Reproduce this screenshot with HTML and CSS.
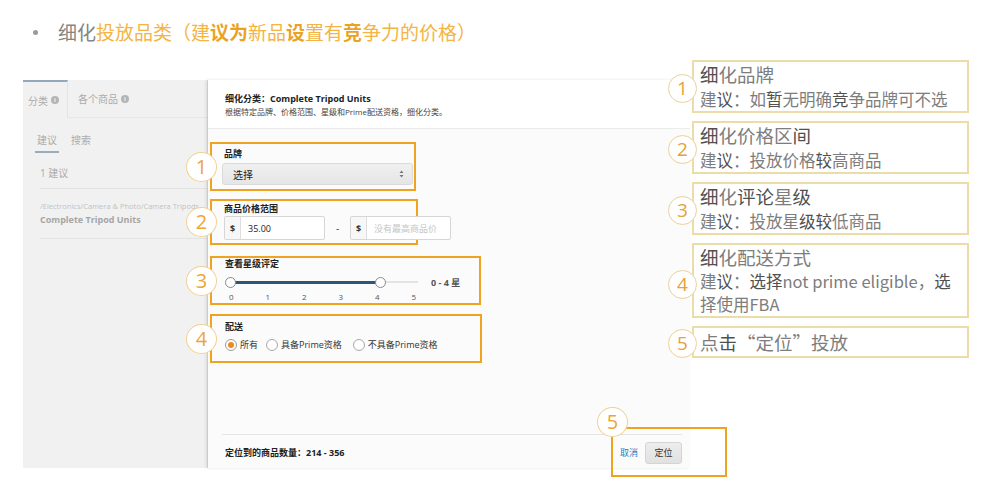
FILE: index.html
```html
<!DOCTYPE html>
<html lang="zh-CN">
<head>
<meta charset="utf-8">
<title>细化投放品类</title>
<link rel="stylesheet" href="styles.css">
</head>
<body>
<div class="page">
  <div class="headline">
    <span class="dot"></span>
    <span class="hl-grey">细化</span><span class="hl-org">投放品类（建<b>议为</b>新品<b>设</b>置有<b>竞</b>争力的价格）</span>
  </div>

  <div class="main">
    <div class="shot">
      <div class="side">
        <div class="tabs">
          <div class="tab active">分类 <span class="info">i</span></div>
          <div class="tab">各个商品 <span class="info">i</span></div>
        </div>
        <div class="subtabs">
          <span class="subtab on">建议</span>
          <span class="subtab">搜索</span>
        </div>
        <div class="count">1 建议</div>
        <div class="crumb">
          <div class="path">/Electronics/Camera &amp; Photo/Camera Tripods</div>
          <div class="cat">Complete Tripod Units</div>
        </div>
      </div>

      <div class="content">
        <div class="chead">
          <div class="ctitle">细化分类：Complete Tripod Units</div>
          <div class="csub">根据特定品牌、价格范围、星级和Prime配送资格，细化分类。</div>
        </div>

        <div class="groups">
          <div class="grp g1">
            <span class="num">1</span>
            <div class="lbl">品牌</div>
            <div class="select">
              <span>选择</span>
              <svg class="updown" width="5" height="8" viewBox="0 0 5 8"><path d="M2.5 0.5 L4.5 3 L0.5 3 Z M2.5 7.5 L4.5 5 L0.5 5 Z" fill="#777"/></svg>
            </div>
          </div>

          <div class="grp g2">
            <span class="num">2</span>
            <div class="lbl">商品价格范围</div>
            <div class="prices">
              <div class="ig"><span class="cur">$</span><span class="val">35.00</span></div>
              <span class="dash">-</span>
              <div class="ig"><span class="cur">$</span><span class="ph">没有最高商品价</span></div>
            </div>
          </div>

          <div class="grp g3">
            <span class="num">3</span>
            <div class="lbl">查看星级评定</div>
            <div class="srow">
              <div class="slider">
                <div class="track"></div>
                <div class="fill"></div>
                <span class="thumb t0"></span>
                <span class="thumb t4"></span>
              </div>
              <span class="srange">0 - 4 星</span>
            </div>
            <div class="ticks"><span>0</span><span>1</span><span>2</span><span>3</span><span>4</span><span>5</span></div>
          </div>

          <div class="grp g4">
            <span class="num">4</span>
            <div class="lbl">配送</div>
            <div class="radios">
              <label class="radio"><span class="rb checked"></span>所有</label>
              <label class="radio"><span class="rb"></span>具备Prime资格</label>
              <label class="radio"><span class="rb"></span>不具备Prime资格</label>
            </div>
          </div>
        </div>

        <div class="footer">
          <span class="found">定位到的商品数量：214 - 356</span>
          <div class="actions">
            <span class="cancel">取消</span>
            <span class="btn">定位</span>
          </div>
          <div class="hl5"><span class="num n5">5</span></div>
        </div>
      </div>
    </div>

    <div class="notes">
      <div class="note">
        <span class="nnum">1</span>
        <div class="nt"><b>细</b>化品牌</div>
        <div class="nb">建<b>议</b>：如<b>暂</b>无明确<b>竞</b>争品牌可不选</div>
      </div>
      <div class="note">
        <span class="nnum">2</span>
        <div class="nt"><b>细</b>化价格区<b>间</b></div>
        <div class="nb">建<b>议</b>：投放价格<b>较</b>高商品</div>
      </div>
      <div class="note">
        <span class="nnum">3</span>
        <div class="nt"><b>细</b>化<b>评论</b>星<b>级</b></div>
        <div class="nb">建<b>议</b>：投放星<b>级较</b>低商品</div>
      </div>
      <div class="note tall">
        <span class="nnum n4">4</span>
        <div class="nt"><b>细</b>化配送方式</div>
        <div class="nb">建<b>议</b>：<b>选择</b>not prime eligible，<b>选</b><br>择使用FBA</div>
      </div>
      <div class="note single">
        <span class="nnum">5</span>
        <div class="nt">点<b>击</b>“定位”投放</div>
      </div>
    </div>
  </div>
</div>
</body>
</html>
```

FILE: styles.css
```css
* { box-sizing: border-box; }

html, body {
  margin: 0;
  padding: 0;
  background: #ffffff;
}

body {
  font-family: "Open Sans", "Noto Sans CJK SC", sans-serif;
  color: #333;
}

.page {
  width: 1000px;
  height: 497px;
  overflow: hidden;
}

/* ---------- headline ---------- */
.headline {
  display: flex;
  align-items: center;
  padding: 22px 0 0 33px;
  height: 42px;
  margin-bottom: 18px;
  font-family: "Noto Sans CJK SC", sans-serif;
  font-size: 19px;
  line-height: 20px;
}
.dot {
  width: 5px;
  height: 5px;
  border-radius: 50%;
  background: #9a9a9a;
  margin-right: 20px;
  flex: none;
}
.hl-grey { color: #858585; }
.hl-org { color: #f4b443; }
.hl-org b { color: #eba31f; font-weight: 700; }

/* ---------- main row ---------- */
.main {
  display: flex;
  align-items: flex-start;
  padding-left: 23px;
}

.shot {
  margin-top: 20px;
  width: 667px;
  height: 388px;
  display: flex;
}

/* ---------- left side panel ---------- */
.side {
  width: 185px;
  background: #f1f1f1;
  border-right: 1px solid #dedede;
  overflow: hidden;
  font-size: 10px;
  color: #ababab;
}

.tabs {
  height: 38px;
  display: flex;
  border-bottom: 1px solid #e6e6e6;
}
.tab {
  display: flex;
  align-items: center;
  gap: 3px;
  padding-left: 10px;
  flex: 1;
}
.tab.active {
  flex: 0 0 45px;
  padding-left: 5px;
  border-top: 2px solid #93a8ba;
  border-right: 1px solid #e4e4e4;
  margin-bottom: -1px;
  background: #f1f1f1;
}
.info {
  display: inline-flex;
  width: 8px;
  height: 8px;
  border-radius: 50%;
  background: #b4b4b4;
  color: #f4f4f4;
  font-size: 6px;
  font-weight: 700;
  line-height: 8px;
  justify-content: center;
}

.subtabs {
  display: flex;
  gap: 10px;
  padding: 15px 0 0 12px;
  height: 39px;
}
.subtab {
  line-height: 14px;
  height: 20px;
  padding: 0 2px;
}
.subtab.on {
  border-bottom: 2px solid #9badbd;
}

.count {
  margin-left: 17px;
  height: 32px;
  line-height: 32px;
  border-bottom: 1px solid #e2e2e2;
}

.crumb {
  margin-left: 17px;
  padding-top: 11px;
  height: 50px;
  border-bottom: 1px solid #e2e2e2;
}
.path {
  font-size: 7.5px;
  line-height: 12px;
  color: #c2c2c2;
  white-space: nowrap;
}
.cat {
  font-size: 9px;
  font-weight: 700;
  line-height: 16px;
  color: #a6a6a6;
}

/* ---------- right content ---------- */
.content {
  width: 482px;
  background: #fbfbfb;
  display: flex;
  flex-direction: column;
  box-shadow: -2px 0 3px rgba(0, 0, 0, 0.10);
  position: relative;
}

.chead {
  height: 49px;
  padding: 13px 0 0 17px;
  background: #ffffff;
  border-bottom: 1px solid #ebebeb;
}
.ctitle {
  font-size: 9px;
  font-weight: 700;
  line-height: 12px;
  color: #222;
}
.csub {
  font-size: 8px;
  line-height: 14px;
  color: #444;
}

.groups {
  padding: 13px 0 0 2px;
  display: flex;
  flex-direction: column;
  align-items: flex-start;
}

.grp {
  position: relative;
  border: 2px solid #f0a320;
  padding-left: 12px;
}
.lbl {
  font-size: 9px;
  font-weight: 700;
  line-height: 12px;
  color: #222;
}

.num {
  position: absolute;
  left: -26px;
  top: 50%;
  margin-top: -15px;
  width: 31px;
  height: 30px;
  border-radius: 50%;
  border: 1.5px solid #f2cf92;
  background: #ffffff;
  color: #eda536;
  font-size: 20px;
  line-height: 27px;
  text-align: center;
  font-family: "Open Sans", sans-serif;
}

/* group 1 */
.g1 {
  width: 206px;
  height: 49px;
  padding: 4px 0 0 10px;
}
.g1 .lbl { padding-left: 2px; }
.select {
  margin-top: 3px;
  width: 191px;
  height: 22px;
  border: 1px solid #dadada;
  border-radius: 3px;
  background: linear-gradient(#f0f0f0, #e6e6e6);
  display: flex;
  align-items: center;
  justify-content: space-between;
  padding: 0 8px 0 10px;
  font-size: 10px;
  color: #222;
}

/* group 2 */
.g2 {
  margin-top: 8px;
  width: 208px;
  height: 46px;
  padding-top: 2px;
}
.prices {
  margin-top: 1px;
  display: flex;
  align-items: center;
}
.ig {
  width: 101px;
  height: 24px;
  border: 1px solid #d6d6d6;
  border-radius: 2px;
  background: #ffffff;
  display: flex;
  align-items: center;
  font-size: 9px;
  flex: none;
}
.cur {
  width: 16px;
  height: 100%;
  display: flex;
  align-items: center;
  justify-content: center;
  border-right: 1px solid #dedede;
  background: #f7f7f7;
  color: #333;
  font-weight: 700;
}
.val {
  padding-left: 7px;
  color: #222;
}
.ph {
  padding-left: 7px;
  color: #c4c4c4;
  white-space: nowrap;
}
.dash {
  width: 25px;
  text-align: center;
  font-size: 10px;
  color: #444;
  flex: none;
}

/* group 3 */
.g3 {
  margin-top: 11px;
  width: 271px;
  height: 49px;
  padding-left: 13px;
}
.srow {
  display: flex;
  align-items: center;
  height: 12px;
  margin-top: 6px;
}
.slider {
  position: relative;
  width: 193px;
  height: 12px;
}
.track {
  position: absolute;
  left: 5px;
  right: 0;
  top: 5px;
  height: 2px;
  background: #e4e4e4;
}
.fill {
  position: absolute;
  left: 5px;
  width: 151px;
  top: 4.5px;
  height: 3px;
  background: #2f5579;
}
.thumb {
  position: absolute;
  top: 0.5px;
  width: 11px;
  height: 11px;
  border-radius: 50%;
  border: 1px solid #8a8a8a;
  background: #ffffff;
}
.t0 { left: 0; }
.t4 { left: 150px; }
.srange {
  margin-left: 13px;
  font-size: 9px;
  font-weight: 700;
  color: #555;
  white-space: nowrap;
}
.ticks {
  display: flex;
  justify-content: space-between;
  width: 191px;
  padding-left: 4px;
  margin-top: 3px;
  font-size: 8px;
  line-height: 11px;
  color: #555;
}

/* group 4 */
.g4 {
  margin-top: 9px;
  width: 272px;
  height: 49px;
  padding: 5px 0 0 13px;
}
.radios {
  display: flex;
  align-items: center;
  margin-top: 5px;
  font-size: 9px;
  color: #333;
}
.radio {
  display: flex;
  align-items: center;
  gap: 3px;
  margin-right: 8px;
}
.radio:nth-child(2) { margin-right: 11px; }
.rb {
  width: 12px;
  height: 12px;
  border-radius: 50%;
  border: 1px solid #a8a8a8;
  background: #ffffff;
  display: inline-flex;
  align-items: center;
  justify-content: center;
}
.rb.checked {
  border-color: #9a9a9a;
}
.rb.checked::after {
  content: "";
  width: 6px;
  height: 6px;
  border-radius: 50%;
  background: #ec8a1e;
}

/* footer */
.footer {
  margin: auto 8px 0 14px;
  height: 34px;
  border-top: 1px solid #e6e6e6;
  display: flex;
  align-items: center;
  justify-content: space-between;
  padding: 2px 0 0 3px;
  position: relative;
}
.found {
  font-size: 9px;
  font-weight: 700;
  color: #222;
}
.actions {
  display: flex;
  align-items: center;
  gap: 7px;
  position: relative;
  z-index: 1;
}
.cancel {
  font-size: 9px;
  color: #1b7fc4;
}
.btn {
  width: 37px;
  height: 22px;
  border: 1px solid #d4d4d4;
  border-radius: 3px;
  background: linear-gradient(#ededed, #e1e1e1);
  font-size: 9px;
  color: #333;
  display: flex;
  align-items: center;
  justify-content: center;
}
.hl5 {
  position: absolute;
  left: 389px;
  top: -8px;
  width: 116px;
  height: 50px;
  border: 2px solid #f0a320;
}
.num.n5 {
  left: -16px;
  top: -22px;
  margin-top: 0;
}

/* ---------- notes column ---------- */
.notes {
  margin-left: 2px;
  width: 277px;
  display: flex;
  flex-direction: column;
  gap: 7px;
  font-family: "Noto Sans CJK SC", sans-serif;
  color: #7d7d7d;
}
.note {
  position: relative;
  border: 2px solid #ecdca8;
  padding: 0 0 0 6px;
  min-height: 53px;
}
.note + .note { margin-top: 1px; }
.note.single {
  min-height: 32px;
  padding-top: 0;
}
.nt {
  font-size: 18.5px;
  line-height: 25px;
}
.single .nt { line-height: 28px; }
.nb {
  font-size: 16.5px;
  line-height: 24px;
}
.tall .nb { line-height: 23px; }
.note b {
  font-weight: 400;
  color: #505050;
}
.nnum {
  position: absolute;
  left: -26px;
  top: 50%;
  margin-top: -13px;
  width: 29px;
  height: 29px;
  border-radius: 50%;
  border: 1.5px solid #ecd096;
  background: #ffffff;
  color: #e3a23b;
  font-size: 19px;
  line-height: 26px;
  text-align: center;
  font-family: "Open Sans", sans-serif;
}
.nnum.n4 { margin-top: -11px; }
```
